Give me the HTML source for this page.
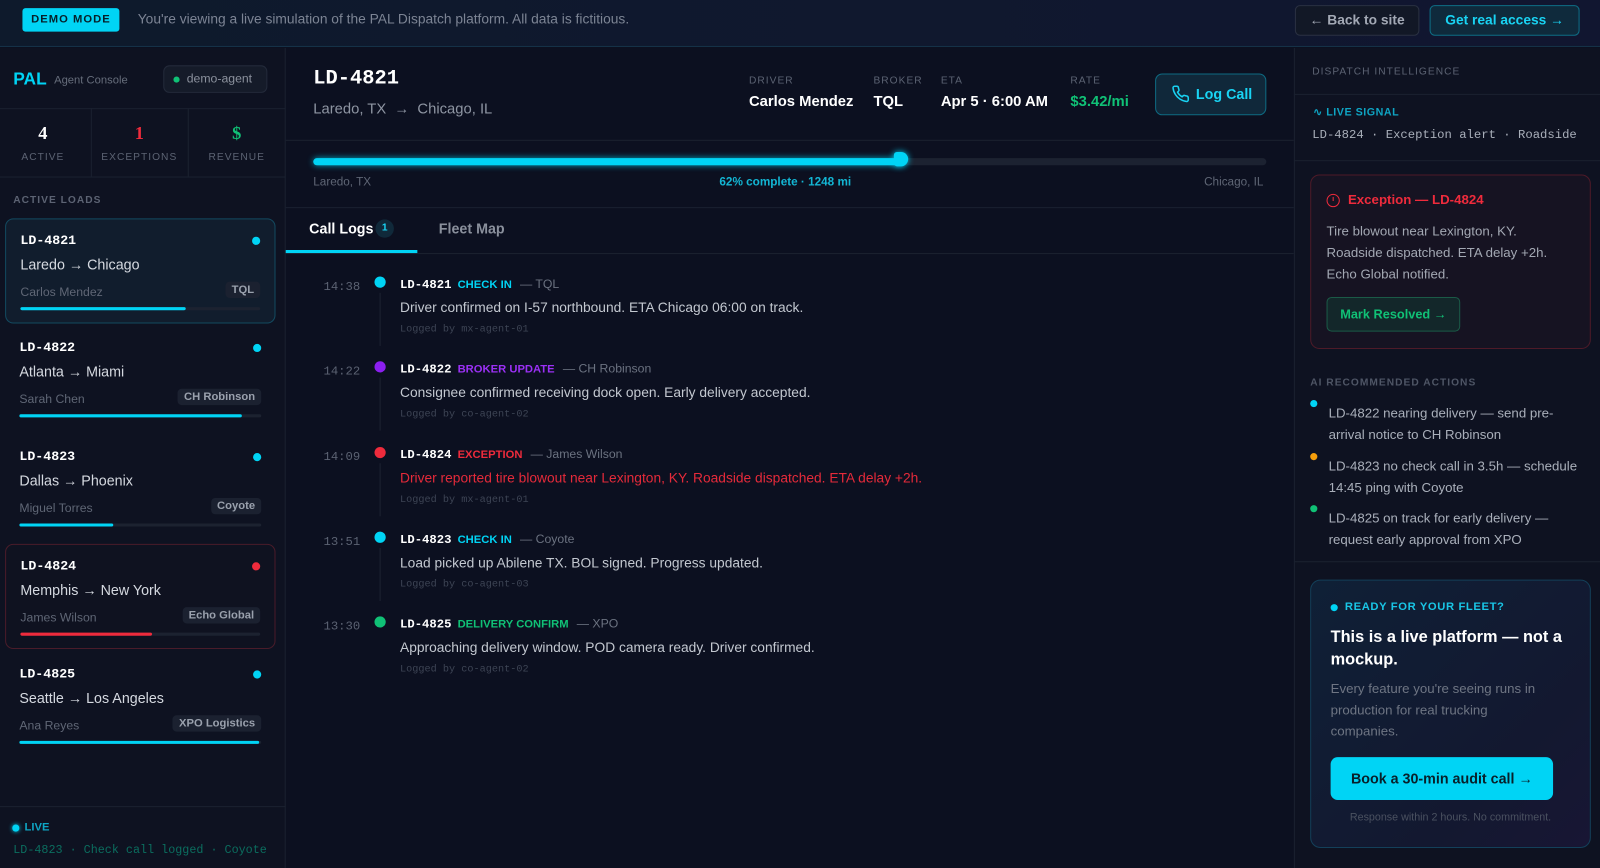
<!DOCTYPE html>
<html><head><meta charset="utf-8">
<style>
*{box-sizing:border-box;margin:0;padding:0}
html,body{width:1600px;height:868px;overflow:hidden;background:#0c1020}
#w{width:1568px;height:851px;transform:scale(1.020408);transform-origin:0 0;position:relative;font-family:"Liberation Sans",sans-serif;color:#e6e9ef;background:#0c1020}
.a{position:absolute}
.mono{font-family:"Liberation Mono",monospace}
.top{left:0;top:0;width:1568px;height:46px;background:linear-gradient(90deg,#0e1a2c,#111630);border-bottom:1px solid #16344a}
.lbl{font-size:10px;letter-spacing:1px;color:#5c6373;font-weight:bold}
.card{position:absolute;left:5px;width:265px;height:103px;border-radius:8px}
.card .id{position:absolute;left:14px;top:13px;font:bold 13px "Liberation Mono",monospace;color:#fff}
.card .dot{position:absolute;right:14px;top:17px;width:8px;height:8px;border-radius:50%;background:#00d4f5}
.card .rt{position:absolute;left:14px;top:36px;font-size:14px;color:#d5d9e0}
.card .dr{position:absolute;left:14px;top:64px;font-size:12px;color:#5f6675}
.card .tag{position:absolute;right:14px;top:61px;font-size:11px;color:#9aa1ad;background:#1b2130;border-radius:4px;padding:2px 6px;font-weight:bold}
.card .bar{position:absolute;left:14px;right:14px;top:86px;height:3px;background:#1c2230;border-radius:2px}
.card .bar i{display:block;height:3px;background:#00d4f5;border-radius:2px}
.log{position:absolute;left:280px;width:988px;height:83px}
.log .t{position:absolute;left:37px;top:1px;font:12px "Liberation Mono",monospace;color:#5b6272}
.log .d{position:absolute;left:87px;top:-2px;width:11px;height:11px;border-radius:50%}
.log .ln{position:absolute;left:92px;top:14px;width:1px;height:52px;background:#1d2332}
.log .h{position:absolute;left:112px;top:-2px;font-size:12px;white-space:nowrap}
.log .h b{font-family:"Liberation Mono",monospace;color:#fff;margin-right:6px}
.log .h span{font-weight:bold;font-size:11px;margin-right:8px}
.log .h em{font-style:normal;color:#6b7280}
.log .m{position:absolute;left:112px;top:21px;font-size:13.5px;color:#c3c8d0;white-space:nowrap}
.log .g{position:absolute;left:112px;top:45px;font:10px "Liberation Mono",monospace;color:#3d4454}
.rec{position:absolute;left:1302px;width:245px;font-size:13px;line-height:21px;color:#a9afba}
.rec i{position:absolute;left:-18px;top:-2px;width:7px;height:7px;border-radius:50%}
</style></head><body><div id="w">
<div class="a top"></div>
<div class="a" style="left:22px;top:8px;width:95px;height:23px;background:#00d4f5;border-radius:3px;color:#06202a;font-size:11px;font-weight:bold;letter-spacing:1px;text-align:center;line-height:23px">DEMO MODE</div>
<div class="a" style="left:135px;top:11px;font-size:13.5px;color:#7c8494">You're viewing a live simulation of the PAL Dispatch platform. All data is fictitious.</div>
<div class="a" style="left:1269px;top:5px;width:122px;height:30px;border:1px solid #2a3142;border-radius:5px;background:#121826;color:#a3a9b5;font-size:13.5px;font-weight:bold;text-align:center;line-height:28px">← Back to site</div>
<div class="a" style="left:1401px;top:5px;width:147px;height:30px;border:1px solid #0e6f86;border-radius:5px;background:#0f2a3c;color:#19d3f3;font-size:13.5px;font-weight:bold;text-align:center;line-height:28px">Get real access →</div>

<!-- left -->
<div class="a" style="left:0;top:47px;width:280px;height:804px;background:#0e1221;border-right:1px solid #1b2130"></div>
<div class="a" style="left:13px;top:68px;font-size:17px;font-weight:bold;color:#00d4f5">PAL</div>
<div class="a" style="left:53px;top:73px;font-size:11px;color:#666d7b">Agent Console</div>
<div class="a" style="left:160px;top:64px;width:102px;height:27px;border:1px solid #232a3a;border-radius:6px;background:#151b29;font-size:12px;color:#8b919d;line-height:25px;padding-left:22px">demo-agent</div>
<div class="a" style="left:170px;top:75px;width:6px;height:6px;border-radius:50%;background:#10c176"></div>
<div class="a" style="left:0;top:106px;width:280px;height:1px;background:#1b2130"></div>
<div class="a" style="left:0;top:173px;width:280px;height:1px;background:#1b2130"></div>
<div class="a" style="left:89px;top:106px;width:1px;height:67px;background:#1b2130"></div>
<div class="a" style="left:184px;top:106px;width:1px;height:67px;background:#1b2130"></div>
<div class="a" style="left:0;top:120px;width:84px;text-align:center;font:bold 18px 'Liberation Serif',serif;color:#fff">4</div>
<div class="a" style="left:89px;top:120px;width:95px;text-align:center;font:bold 18px 'Liberation Serif',serif;color:#ef2b3c">1</div>
<div class="a" style="left:184px;top:120px;width:96px;text-align:center;font:bold 18px 'Liberation Serif',serif;color:#10c176">$</div>
<div class="a lbl" style="left:0;top:149px;width:84px;text-align:center;font-weight:normal">ACTIVE</div>
<div class="a lbl" style="left:89px;top:149px;width:95px;text-align:center;font-weight:normal">EXCEPTIONS</div>
<div class="a lbl" style="left:184px;top:149px;width:96px;text-align:center;font-weight:normal">REVENUE</div>
<div class="a lbl" style="left:13px;top:191px">ACTIVE LOADS</div>

<div class="card" style="top:214px;background:#111d2d;border:1px solid #134a60"><div class="id">LD-4821</div><div class="dot"></div><div class="rt">Laredo → Chicago</div><div class="dr">Carlos Mendez</div><div class="tag">TQL</div><div class="bar"><i style="width:69%"></i></div></div>
<div class="card" style="top:320px"><div class="id">LD-4822</div><div class="dot"></div><div class="rt">Atlanta → Miami</div><div class="dr">Sarah Chen</div><div class="tag">CH Robinson</div><div class="bar"><i style="width:92%"></i></div></div>
<div class="card" style="top:427px"><div class="id">LD-4823</div><div class="dot"></div><div class="rt">Dallas → Phoenix</div><div class="dr">Miguel Torres</div><div class="tag">Coyote</div><div class="bar"><i style="width:39%"></i></div></div>
<div class="card" style="top:533px;border:1px solid #4a1c2a;background:#0f1220"><div class="id">LD-4824</div><div class="dot" style="background:#ef2b3c"></div><div class="rt">Memphis → New York</div><div class="dr">James Wilson</div><div class="tag">Echo Global</div><div class="bar"><i style="width:55%;background:#ef2b3c"></i></div></div>
<div class="card" style="top:640px"><div class="id">LD-4825</div><div class="dot"></div><div class="rt">Seattle → Los Angeles</div><div class="dr">Ana Reyes</div><div class="tag">XPO Logistics</div><div class="bar"><i style="width:99%"></i></div></div>

<div class="a" style="left:0;top:790px;width:280px;height:1px;background:#1b2130"></div>
<div class="a" style="left:12px;top:808px;width:7px;height:7px;border-radius:50%;background:#00d4f5;box-shadow:0 0 4px #00d4f5"></div>
<div class="a" style="left:24px;top:805px;font-size:11px;font-weight:bold;color:#0ea5c4">LIVE</div>
<div class="a mono" style="left:13px;top:827px;font-size:11.5px;color:#0b6e5f;white-space:nowrap;width:252px;overflow:hidden">LD-4823 · Check call logged · Coyote</div>

<!-- main -->
<div class="a mono" style="left:307px;top:66px;font-size:20px;font-weight:bold;color:#fff">LD-4821</div>
<div class="a" style="left:307px;top:99px;font-size:14.5px;color:#8e95a2">Laredo, TX &nbsp;→&nbsp; Chicago, IL</div>
<div class="a lbl" style="left:734px;top:74px;font-weight:normal">DRIVER</div>
<div class="a lbl" style="left:856px;top:74px;font-weight:normal">BROKER</div>
<div class="a lbl" style="left:922px;top:74px;font-weight:normal">ETA</div>
<div class="a lbl" style="left:1049px;top:74px;font-weight:normal">RATE</div>
<div class="a" style="left:734px;top:92px;font-size:14.5px;font-weight:bold;color:#fff">Carlos Mendez</div>
<div class="a" style="left:856px;top:92px;font-size:14.5px;font-weight:bold;color:#fff">TQL</div>
<div class="a" style="left:922px;top:92px;font-size:14.5px;font-weight:bold;color:#fff">Apr 5 · 6:00 AM</div>
<div class="a" style="left:1049px;top:92px;font-size:14.5px;font-weight:bold;color:#10c176">$3.42/mi</div>
<div class="a" style="left:1132px;top:72px;width:109px;height:41px;border:1px solid #0e6a82;border-radius:7px;background:#10283a;color:#19d3f3;font-size:14px;font-weight:bold;line-height:39px;padding-left:39px">Log Call</div>
<svg class="a" style="left:1148px;top:83px" width="18" height="18" viewBox="0 0 24 24" fill="none" stroke="#19d3f3" stroke-width="2" stroke-linecap="round" stroke-linejoin="round"><path d="M22 16.9v3a2 2 0 0 1-2.2 2 19.8 19.8 0 0 1-8.6-3.1 19.5 19.5 0 0 1-6-6A19.8 19.8 0 0 1 2.1 4.2 2 2 0 0 1 4.1 2h3a2 2 0 0 1 2 1.7c.1.9.4 1.8.7 2.7a2 2 0 0 1-.5 2.1L8 9.8a16 16 0 0 0 6 6l1.3-1.3a2 2 0 0 1 2.1-.4c.9.3 1.8.6 2.7.7a2 2 0 0 1 1.7 2z"/></svg>
<div class="a" style="left:280px;top:137px;width:988px;height:1px;background:#1b2130"></div>
<div class="a" style="left:307px;top:155px;width:934px;height:7px;background:#1c2231;border-radius:4px"></div>
<div class="a" style="left:307px;top:155px;width:578px;height:7px;background:#00d4f5;border-radius:4px;box-shadow:0 0 6px #00a8c4"></div>
<div class="a" style="left:876px;top:149px;width:14px;height:14px;background:#00d4f5;border-radius:3px 7px 7px 3px;box-shadow:0 0 6px #00d4f5"></div>
<div class="a" style="left:307px;top:173px;font-size:11.5px;color:#5f6675">Laredo, TX</div>
<div class="a" style="left:705px;top:173px;font-size:11.5px;font-weight:bold;color:#13b6d4">62% complete · 1248 mi</div>
<div class="a" style="left:1180px;top:173px;font-size:11.5px;color:#5f6675">Chicago, IL</div>
<div class="a" style="left:280px;top:203px;width:988px;height:1px;background:#1b2130"></div>
<div class="a" style="left:280px;top:248px;width:988px;height:1px;background:#1b2130"></div>
<div class="a" style="left:303px;top:216px;font-size:14px;font-weight:bold;color:#fff">Call Logs</div>
<div class="a" style="left:368px;top:215px;width:18px;height:18px;border-radius:50%;background:#10293a;color:#19d3f3;font-size:10px;font-weight:bold;text-align:center;line-height:18px">1</div>
<div class="a" style="left:430px;top:216px;font-size:14px;font-weight:bold;color:#8a909c">Fleet Map</div>
<div class="a" style="left:280px;top:245px;width:129px;height:3px;background:#00d4f5"></div>

<div class="log" style="top:273px"><div class="t">14:38</div><div class="d" style="background:#00d4f5"></div><div class="ln"></div><div class="h"><b>LD-4821</b><span style="color:#00d4f5">CHECK IN</span><em>— TQL</em></div><div class="m">Driver confirmed on I-57 northbound. ETA Chicago 06:00 on track.</div><div class="g">Logged by mx-agent-01</div></div>
<div class="log" style="top:356px"><div class="t">14:22</div><div class="d" style="background:#8b1ff0"></div><div class="ln"></div><div class="h"><b>LD-4822</b><span style="color:#9b30f5">BROKER UPDATE</span><em>— CH Robinson</em></div><div class="m">Consignee confirmed receiving dock open. Early delivery accepted.</div><div class="g">Logged by co-agent-02</div></div>
<div class="log" style="top:440px"><div class="t">14:09</div><div class="d" style="background:#ef2b3c"></div><div class="ln"></div><div class="h"><b>LD-4824</b><span style="color:#ef2b3c">EXCEPTION</span><em>— James Wilson</em></div><div class="m" style="color:#e52a3a">Driver reported tire blowout near Lexington, KY. Roadside dispatched. ETA delay +2h.</div><div class="g">Logged by mx-agent-01</div></div>
<div class="log" style="top:523px"><div class="t">13:51</div><div class="d" style="background:#00d4f5"></div><div class="ln"></div><div class="h"><b>LD-4823</b><span style="color:#00d4f5">CHECK IN</span><em>— Coyote</em></div><div class="m">Load picked up Abilene TX. BOL signed. Progress updated.</div><div class="g">Logged by co-agent-03</div></div>
<div class="log" style="top:606px"><div class="t">13:30</div><div class="d" style="background:#10c176"></div><div class="h"><b>LD-4825</b><span style="color:#10c176">DELIVERY CONFIRM</span><em>— XPO</em></div><div class="m">Approaching delivery window. POD camera ready. Driver confirmed.</div><div class="g">Logged by co-agent-02</div></div>

<!-- right -->
<div class="a" style="left:1268px;top:47px;width:300px;height:804px;background:#0e1221;border-left:1px solid #1b2130"></div>
<div class="a lbl" style="left:1286px;top:65px;font-weight:normal;color:#5c6373">DISPATCH INTELLIGENCE</div>
<div class="a" style="left:1268px;top:92px;width:300px;height:1px;background:#1b2130"></div>
<div class="a" style="left:1287px;top:104px;font-size:10.5px;font-weight:bold;letter-spacing:.5px;color:#0ea5c4">∿ LIVE SIGNAL</div>
<div class="a mono" style="left:1286px;top:125px;font-size:12px;color:#a9afba;white-space:nowrap">LD-4824 · Exception alert · Roadside</div>
<div class="a" style="left:1268px;top:157px;width:300px;height:1px;background:#1b2130"></div>
<div class="a" style="left:1284px;top:171px;width:275px;height:171px;border:1px solid #4e1a28;border-radius:9px;background:#161322"></div>
<div class="a" style="left:1300px;top:190px;width:13px;height:13px;border:1.6px solid #ef2b3c;border-radius:50%"></div>
<div class="a" style="left:1305.5px;top:193px;width:1.6px;height:4px;background:#ef2b3c"></div>
<div class="a" style="left:1321px;top:188px;font-size:13px;font-weight:bold;color:#ef2b3c">Exception — LD-4824</div>
<div class="a" style="left:1300px;top:216px;font-size:13px;line-height:21px;color:#a3a8b3">Tire blowout near Lexington, KY.<br>Roadside dispatched. ETA delay +2h.<br>Echo Global notified.</div>
<div class="a" style="left:1300px;top:291px;width:131px;height:34px;border:1px solid #1b5a47;border-radius:5px;background:#13272a;color:#10c176;font-size:12.5px;font-weight:bold;text-align:center;line-height:32px">Mark Resolved →</div>
<div class="a lbl" style="left:1284px;top:370px;color:#4f5666">AI RECOMMENDED ACTIONS</div>
<div class="rec" style="top:394px"><i style="background:#00d4f5"></i>LD-4822 nearing delivery — send pre-arrival notice to CH Robinson</div>
<div class="rec" style="top:446px"><i style="background:#f59e0b"></i>LD-4823 no check call in 3.5h — schedule 14:45 ping with Coyote</div>
<div class="rec" style="top:497px"><i style="background:#10c176"></i>LD-4825 on track for early delivery — request early approval from XPO</div>
<div class="a" style="left:1268px;top:550px;width:300px;height:1px;background:#1b2130"></div>
<div class="a" style="left:1284px;top:568px;width:275px;height:263px;border:1px solid #13405a;border-radius:10px;background:linear-gradient(135deg,#0f2036,#131830 70%,#181634)"></div>
<div class="a" style="left:1304px;top:592px;width:7px;height:7px;border-radius:50%;background:#00d4f5"></div>
<div class="a" style="left:1318px;top:589px;font-size:11px;font-weight:bold;letter-spacing:.6px;color:#19c6e6">READY FOR YOUR FLEET?</div>
<div class="a" style="left:1304px;top:614px;width:240px;font-size:16px;line-height:22px;font-weight:bold;color:#fff">This is a live platform — not a mockup.</div>
<div class="a" style="left:1304px;top:664px;width:212px;font-size:13px;line-height:21px;color:#6e7583">Every feature you're seeing runs in production for real trucking companies.</div>
<div class="a" style="left:1304px;top:742px;width:218px;height:42px;background:#00d4f5;border-radius:7px;color:#08202a;font-size:14px;font-weight:bold;text-align:center;line-height:42px">Book a 30-min audit call →</div>
<div class="a" style="left:1284px;top:795px;width:275px;text-align:center;font-size:10.5px;color:#4a5160">Response within 2 hours. No commitment.</div>
</div></body></html>
